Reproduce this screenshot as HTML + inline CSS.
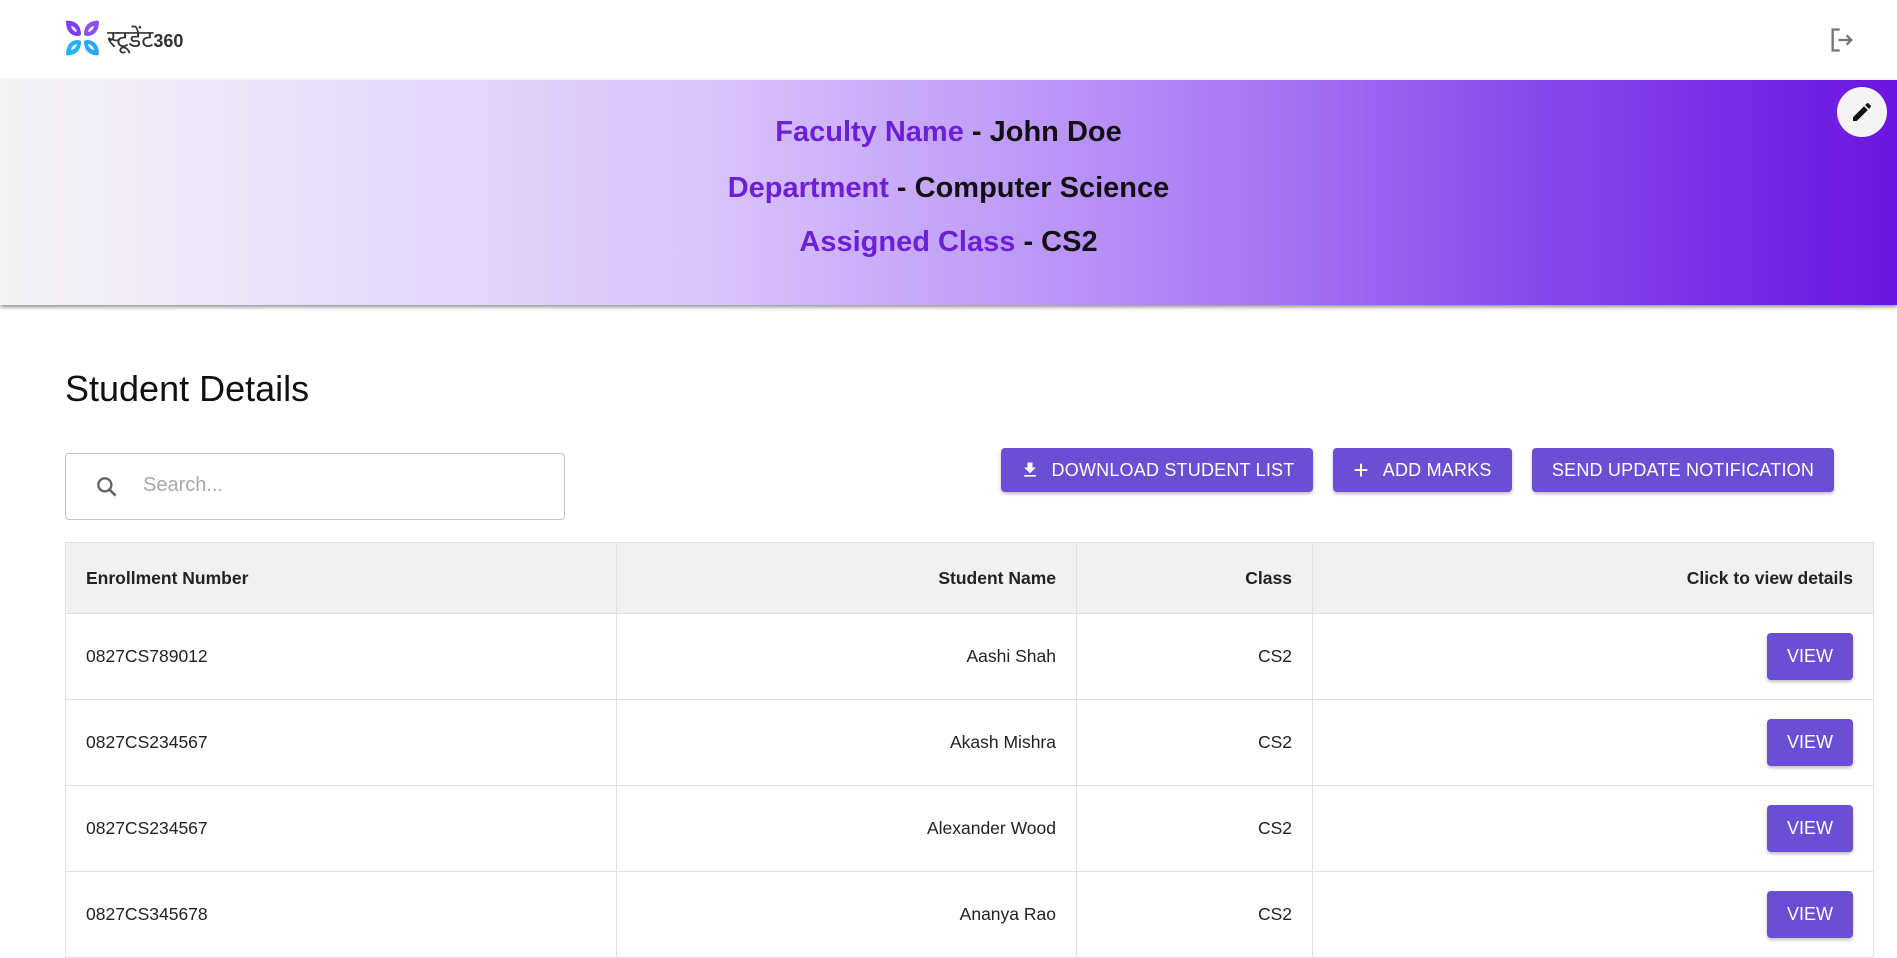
<!DOCTYPE html>
<html><head><meta charset="utf-8"><style>
*{box-sizing:border-box;margin:0;padding:0}
body{width:1897px;height:903px;overflow:hidden;background:#fff;font-family:"Liberation Sans",Arial,sans-serif;position:relative}
.abs{position:absolute}
.banner{left:0;top:80px;width:1897px;height:225px;background:linear-gradient(90deg,#f4f4f4 0%,#e6dcfa 20%,#d8c2fb 38%,#b38af6 60%,#8a4cec 80%,#6a15e0 100%);box-shadow:0 2px 4px rgba(0,0,0,.45)}
.line{position:absolute;left:0;width:1897px;text-align:center;font-size:29px;font-weight:bold;color:#111}
.line span{color:#6d1fd8}
.btn{position:absolute;top:448px;height:44px;background:#6a4fd4;color:#fff;border-radius:4px;font-size:18px;display:flex;align-items:center;justify-content:center;box-shadow:0 2px 3px rgba(0,0,0,.25);letter-spacing:.2px}
table{position:absolute;left:65px;top:542px;width:1809px;border-collapse:collapse;font-size:17.5px;color:#222}
td,th{border:1px solid #e0e0e0;padding:0 20px}
th{background:#f1f1f1;height:71px;font-weight:bold}
td{height:86px}
.r{text-align:right}.l{text-align:left}
.v{display:inline-block;width:86px;height:47px;line-height:47px;text-align:center;background:#6a4fd4;color:#fff;border-radius:4px;font-size:18px;box-shadow:0 2px 3px rgba(0,0,0,.25)}
</style></head><body>
<svg class="abs" style="left:64px;top:20px" width="37" height="36" viewBox="0 0 37 36">
<path d="M2 1 Q2 12 9 15 Q14 17 17 15 Q17 5 10 2 Q6 0 2 1Z" fill="#7b3ff0"/>
<path d="M35 1 Q35 12 28 15 Q23 17 20 15 Q20 5 27 2 Q31 0 35 1Z" fill="#8a52f2"/>
<path d="M2 35 Q2 24 9 21 Q14 19 17 21 Q17 31 10 34 Q6 36 2 35Z" fill="#22b4f6"/>
<path d="M35 35 Q35 24 28 21 Q23 19 20 21 Q20 31 27 34 Q31 36 35 35Z" fill="#2aa8f5"/>
<path d="M7 6 Q8 11 13 12 Q12 7 7 6Z M30 6 Q29 11 24 12 Q25 7 30 6Z M7 30 Q8 25 13 24 Q12 29 7 30Z M30 30 Q29 25 24 24 Q25 29 30 30Z" fill="#fff"/>
</svg>
<div class="abs" style="left:107px;top:22px;font-size:24px;color:#333;font-family:'Liberation Sans','DejaVu Sans',sans-serif">स्टूडेंट<span style="font-size:18px;font-weight:bold">360</span></div>
<svg class="abs" style="left:1828px;top:26px" width="28" height="28" viewBox="0 0 24 24"><path d="M10 3H4v18h6M16 8l4 4-4 4M20 12H9" fill="none" stroke="#757575" stroke-width="2"/></svg>
<div class="abs banner">
<div class="line" style="top:36px"><span>Faculty Name</span> - John Doe</div>
<div class="line" style="top:92px"><span>Department</span> - Computer Science</div>
<div class="line" style="top:146px"><span>Assigned Class</span> - CS2</div>
<div class="abs" style="left:1837px;top:7px;width:50px;height:50px;border-radius:50%;background:#f4f4f4"><svg style="margin:13px" width="24" height="24" viewBox="0 0 24 24"><path d="M3 17.25V21h3.75L17.81 9.94l-3.75-3.75L3 17.25zM20.71 7.04a1 1 0 000-1.41l-2.34-2.34a1 1 0 00-1.41 0l-1.83 1.83 3.75 3.75 1.83-1.83z" fill="#111"/></svg></div>
</div>
<div class="abs" style="left:65px;top:368px;font-size:36px;color:#111">Student Details</div>
<div class="abs" style="left:65px;top:453px;width:500px;height:67px;border:1px solid #c4c4c4;border-radius:4px">
<svg class="abs" style="left:28px;top:20px" width="26" height="26" viewBox="0 0 24 24"><circle cx="10" cy="10" r="6" fill="none" stroke="#666" stroke-width="2.2"/><path d="M14.5 14.5L20 20" stroke="#666" stroke-width="2.4"/></svg>
<div class="abs" style="left:77px;top:20px;font-size:20px;color:#a8a8a8">Search...</div>
</div>
<div class="btn" style="left:1001px;width:312px"><svg width="20" height="20" viewBox="0 0 24 24" style="margin-right:12px"><path d="M19 9h-4V3H9v6H5l7 7 7-7zM5 18v2h14v-2H5z" fill="#fff"/></svg>DOWNLOAD STUDENT LIST</div>
<div class="btn" style="left:1333px;width:179px"><span style="font-size:26px;margin-right:14px;line-height:1">+</span>ADD MARKS</div>
<div class="btn" style="left:1532px;width:302px">SEND UPDATE NOTIFICATION</div>
<table>
<tr><th class="l" style="width:551px">Enrollment Number</th><th class="r" style="width:460px">Student Name</th><th class="r" style="width:236px">Class</th><th class="r">Click to view details</th></tr>
<tr><td>0827CS789012</td><td class="r">Aashi Shah</td><td class="r">CS2</td><td class="r"><span class="v">VIEW</span></td></tr>
<tr><td>0827CS234567</td><td class="r">Akash Mishra</td><td class="r">CS2</td><td class="r"><span class="v">VIEW</span></td></tr>
<tr><td>0827CS234567</td><td class="r">Alexander Wood</td><td class="r">CS2</td><td class="r"><span class="v">VIEW</span></td></tr>
<tr><td>0827CS345678</td><td class="r">Ananya Rao</td><td class="r">CS2</td><td class="r"><span class="v">VIEW</span></td></tr>
</table>
</body></html>
